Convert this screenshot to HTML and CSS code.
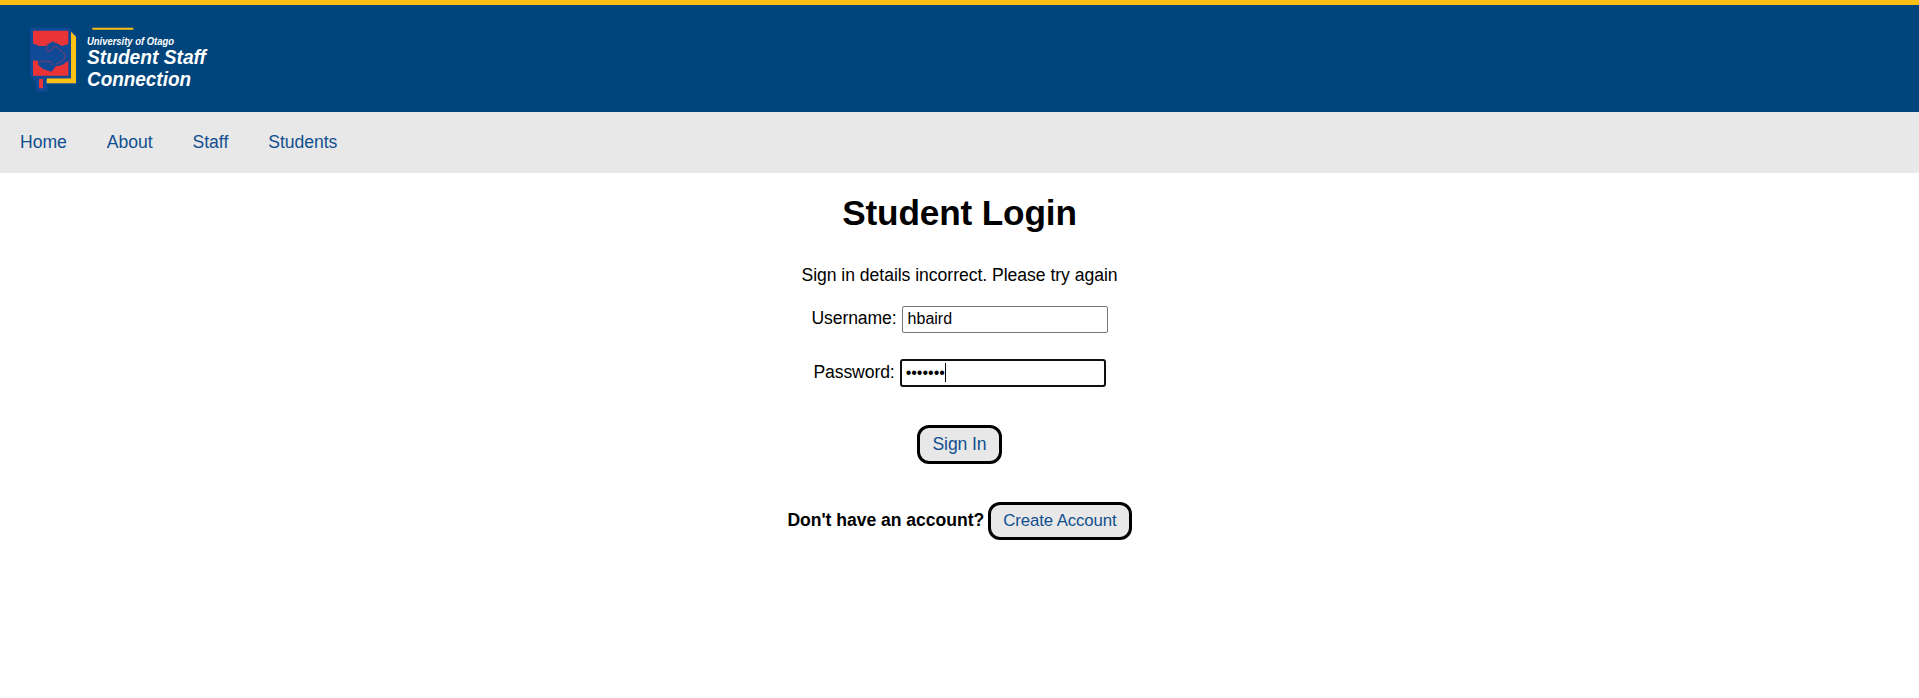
FILE: index.html
```html
<!DOCTYPE html>
<html lang="en">
<head>
<meta charset="utf-8">
<title>Student Login</title>
<link rel="stylesheet" href="styles.css">
</head>
<body>
<header class="banner">
  <svg class="logo" viewBox="0 0 200 80" role="img" aria-label="University of Otago Student Staff Connection">
    <g transform="scale(.33333)">
      <path fill="#104a96" d="M30 38H148L170 60V208H82V230H48V202L30 184Z"/>
      <path fill="#f9c115" d="M153 50L168 65V205H80V190H153Z"/>
      <path fill="#104a96" d="M146 45H153V190H80V196H76V186H146Z"/>
      <path fill="#ea3337" d="M39 47H145V87L126 93 99 79 75 93 57 93 39 85Z"/>
      <path fill="#ea3337" d="M39 136L54 138 55 151 70 163 95 170 107 154 125 151 145 137V182H39ZM57 192H69V220H57Z"/>
      <path fill="none" stroke="#b83358" stroke-width="2" d="M108 84L94 79 86 82 78 102 83 110 92 108 99 96 108 94 136 119 134 132 109 148M56 143L64 138 70 142 77 136 83 141 91 139 100 151"/>
      <path stroke="#f9c115" stroke-width="6" d="M217 41H340"/>
    </g>
    <text class="logo-small" x="67" y="30" textLength="87" lengthAdjust="spacingAndGlyphs">University of Otago</text>
    <text class="logo-big" x="67" y="49" textLength="119" lengthAdjust="spacingAndGlyphs">Student Staff</text>
    <text class="logo-big" x="67" y="71" textLength="104" lengthAdjust="spacingAndGlyphs">Connection</text>
  </svg>
</header>
<nav class="menu"><a>Home</a><a>About</a><a>Staff</a><a>Students</a></nav>
<main class="login">
  <h1 class="title">Student Login</h1>
  <p class="message">Sign in details incorrect. Please try again</p>
  <form class="form">
    <label class="row"><span class="label">Username:</span> <input class="field" type="text" value="hbaird"></label>
    <label class="row row-password"><span class="label">Password:</span> <span class="focus-wrap"><input class="field field-focused" type="password" value="secrets"><i class="caret"></i></span></label>
    <button class="button" type="button">Sign In</button>
  </form>
  <div class="signup"><b class="question">Don't have an account?</b> <a class="button button-create">Create Account</a></div>
</main>
</body>
</html>
```
FILE: styles.css
```css
body {
  margin: 0;
  font: 17.6px/20px "Liberation Sans", Arial, sans-serif;
  color: #000;
  background: #fff;
}
.banner {
  box-sizing: border-box;
  height: 112px;
  padding: 10px 20px;
  border-top: 5px solid #f9c013;
  background: #00447c;
}
.logo { display: block; width: 200px; height: 80px; }
.logo text { fill: #fff; font-weight: bold; font-style: italic; }
.logo-small { font-size: 10.6px; }
.logo-big { font-size: 19.8px; }
.menu {
  display: flex;
  gap: 40px;
  box-sizing: border-box;
  height: 61px;
  padding: 20px;
  background: #e8e8e8;
  color: #104f8f;
  letter-spacing: -0.04px;
}
.login { display: flex; flex-direction: column; align-items: center; }
.title { margin: 20px 0 0; font-size: 35.2px; line-height: 40px; letter-spacing: -0.15px; }
.message { margin: 32px 0 0; letter-spacing: -0.04px; }
.form { display: flex; flex-direction: column; align-items: center; }
.row { display: flex; align-items: center; gap: 5px; margin-top: 21px; height: 27px; }
.row-password { margin-top: 26px; height: 28px; }
.label { padding-bottom: 3px; letter-spacing: -0.1px; }
.field {
  box-sizing: border-box;
  display: block;
  width: 206px;
  height: 27px;
  padding: 0 5px 2px;
  border: 1px solid #767676;
  border-radius: 2px;
  background: #fff;
  color: #000;
  font: 16px "Liberation Sans", Arial, sans-serif;
  outline: none;
}
.focus-wrap { position: relative; }
.field-focused { height: 28px; padding: 0 4px; border: 2px solid #101010; border-radius: 3px; }
.caret { position: absolute; left: 45px; top: 4px; width: 1px; height: 19px; background: #000; }
.button {
  box-sizing: border-box;
  height: 39px;
  margin: 38px 0 0;
  padding: 0 12px 2px;
  border: 3px solid #000;
  border-radius: 12px;
  background: #e8e8e8;
  color: #104f8f;
  font: 17.6px/32px "Liberation Sans", Arial, sans-serif;
  letter-spacing: -0.1px;
}
.signup { display: flex; align-items: center; gap: 4px; margin-top: 38px; }
.question { padding-bottom: 2px; letter-spacing: -0.04px; }
.button-create { height: 38px; margin: 0; font-size: 16.8px; }
```
